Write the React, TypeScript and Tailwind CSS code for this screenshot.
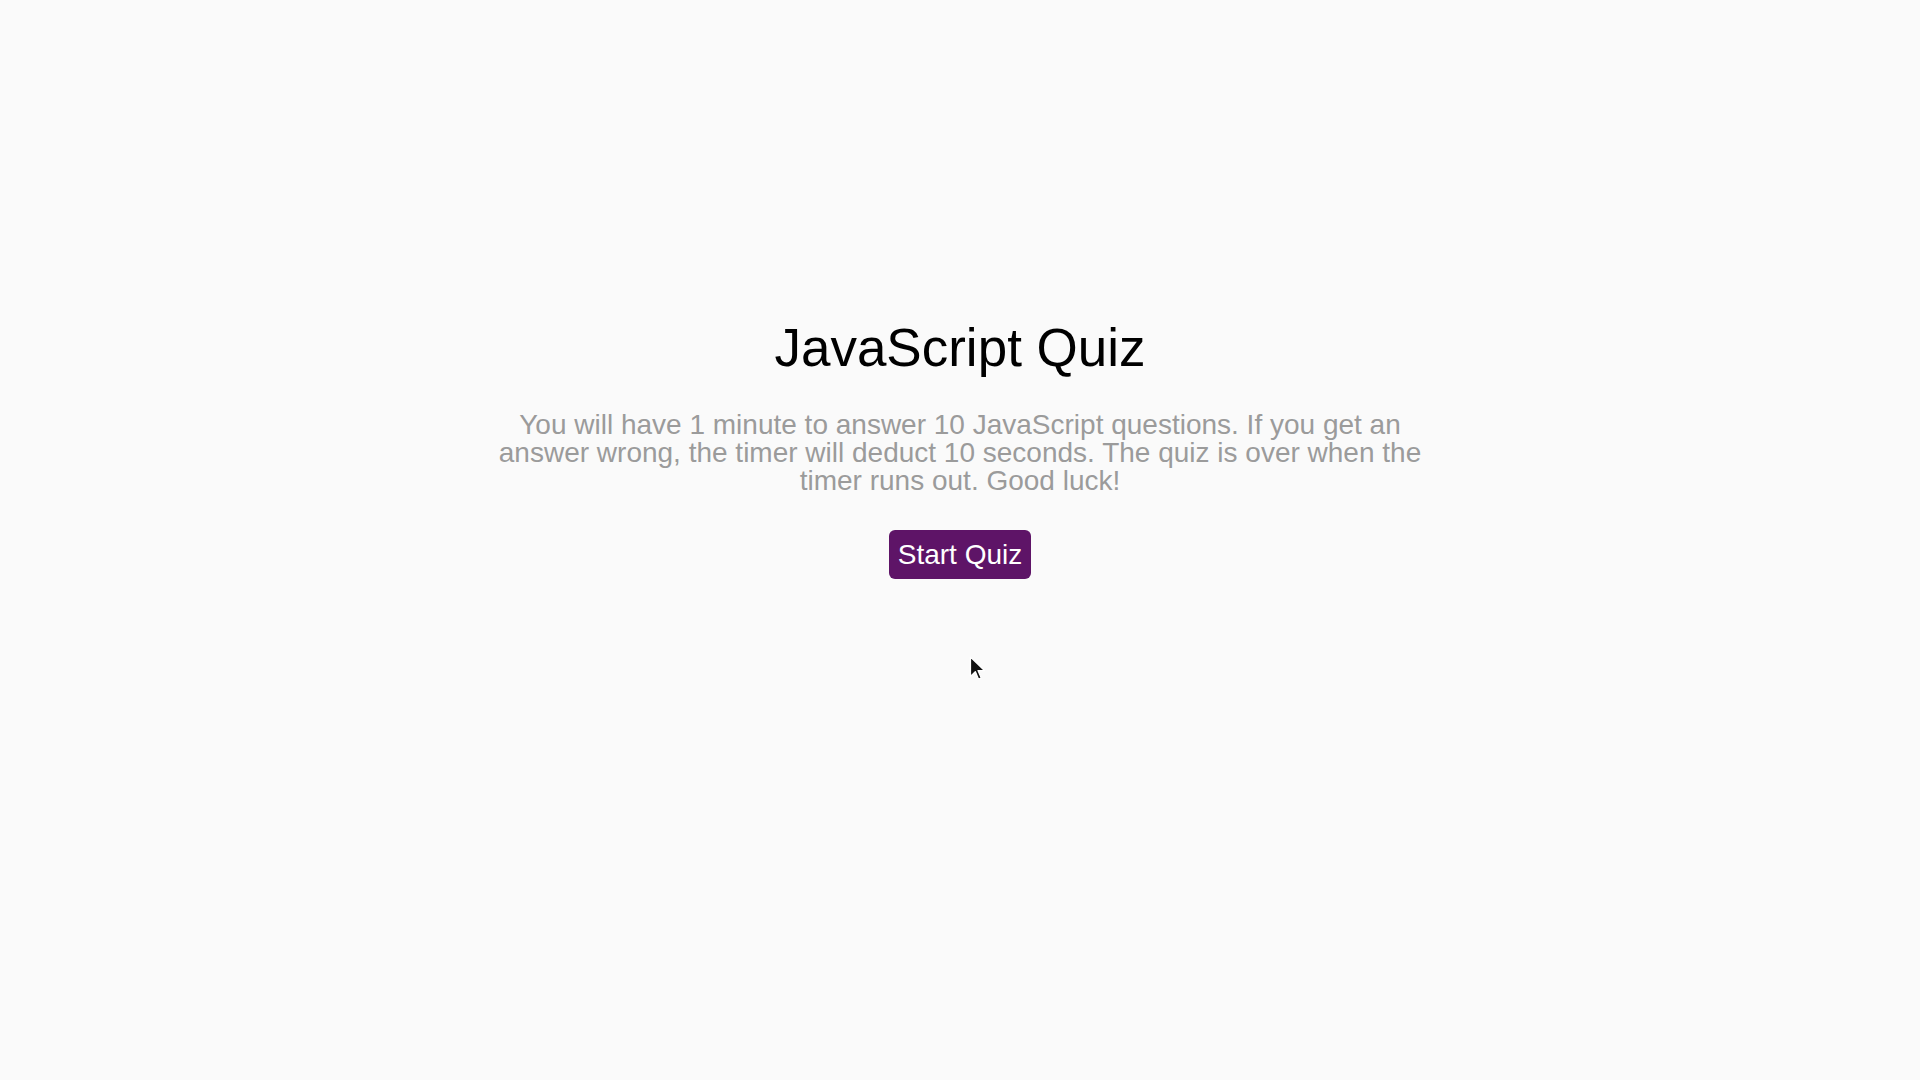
export default function App() {
  return (
    <div className="relative w-full h-[1080px] bg-[#fafafa] overflow-hidden" style={{ fontFamily: '"Liberation Sans", Arial, sans-serif' }}>
      <div className="flex flex-col items-center pt-[318px]">
        <h1 className="text-[53px] leading-[60px] text-black font-normal">JavaScript Quiz</h1>
        <p className="mt-[33px] w-[945px] text-center text-[28px] leading-[28px] text-[#9b9b9b]">
          You will have 1 minute to answer 10 JavaScript questions. If you get an answer wrong, the timer will deduct 10 seconds. The quiz is over when the timer runs out. Good luck!
        </p>
        <button className="mt-[35px] w-[142px] h-[49px] rounded-[6px] bg-[#5e1467] text-white text-[28px] leading-none">
          Start Quiz
        </button>
      </div>
      <svg className="absolute left-[969px] top-[656px]" width="18" height="28" viewBox="0 0 16 26">
        <path d="M1 1 L1 19 L5.5 14.5 L8.5 21.5 L11 20.5 L8 13.5 L14 13.5 Z" fill="#111" stroke="#fff" strokeWidth="1.2" strokeLinejoin="round" />
      </svg>
    </div>
  );
}
